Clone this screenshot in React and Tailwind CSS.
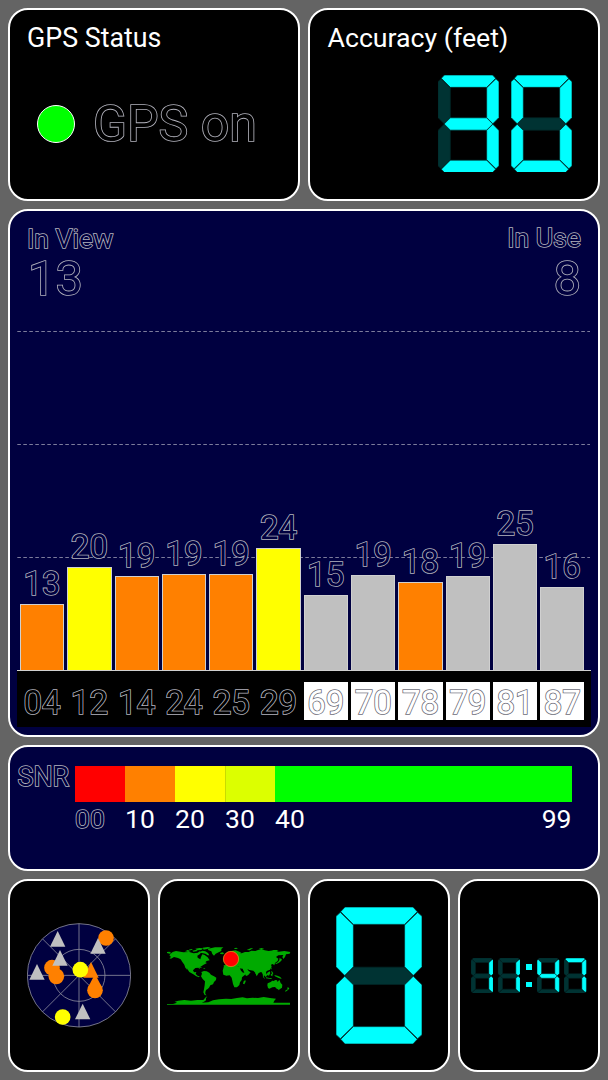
const OUTLINE = "antialiased [paint-order:stroke] [-webkit-text-stroke:1.6px_#b4b4be]";
const OUTLINE_ON_WHITE = "antialiased [paint-order:stroke] [-webkit-text-stroke:1.6px_#6c6c78]";

const satellites = [
  { id: "04", snr: 13, height: 66, color: "bg-[#ff8000]" },
  { id: "12", snr: 20, height: 103, color: "bg-[#ffff00]" },
  { id: "14", snr: 19, height: 94, color: "bg-[#ff8000]" },
  { id: "24", snr: 19, height: 96, color: "bg-[#ff8000]" },
  { id: "25", snr: 19, height: 96, color: "bg-[#ff8000]" },
  { id: "29", snr: 24, height: 122, color: "bg-[#ffff00]" },
  { id: "69", snr: 15, height: 75, color: "bg-[#c0c0c0]", boxed: true },
  { id: "70", snr: 19, height: 95, color: "bg-[#c0c0c0]", boxed: true },
  { id: "78", snr: 18, height: 88.5, color: "bg-[#ff8000]", boxed: true },
  { id: "79", snr: 19, height: 94, color: "bg-[#c0c0c0]", boxed: true },
  { id: "81", snr: 25, height: 126, color: "bg-[#c0c0c0]", boxed: true },
  { id: "87", snr: 16, height: 83, color: "bg-[#c0c0c0]", boxed: true },
];

const scale = [
  { label: "10", color: "bg-[#ff8000]" },
  { label: "20", color: "bg-[#ffff00]" },
  { label: "30", color: "bg-[#dcff00] border-l border-[#c8dc00]" },
];

// Segment outlines on a 257 x 410 grid, keyed by the usual a-g names.
const SEGMENTS = {
  a: "27,0 230,0 243,14 205,52 52,52 14,14",
  b: "244,16 257,28 257,179 231,205 205,179 205,54",
  c: "231,207 257,233 257,382 244,394 205,356 205,233",
  d: "52,358 205,358 243,396 230,410 27,410 14,396",
  e: "26,207 52,233 52,356 13,394 0,382 0,233",
  f: "13,16 52,54 52,179 26,205 0,179 0,28",
  g: "26,206 52,180 205,180 231,206 205,232 52,232",
};

const DIGITS = { 0: "abcdef", 1: "bc", 3: "abcdg", 4: "bcfg", 7: "abc" };

function Digit({ value, className, stroke = 0.7 }) {
  const lit = DIGITS[value];
  const names = Object.keys(SEGMENTS).sort((p, q) => lit.includes(p) - lit.includes(q));
  return (
    <svg viewBox="0 0 257 410" preserveAspectRatio="none" className={className} aria-label={value}>
      {names.map((name) => (
        <polygon
          key={name}
          points={SEGMENTS[name]}
          fill={lit.includes(name) ? "#00ffff" : "#003333"}
          stroke="#002626"
          strokeWidth={stroke}
          vectorEffect="non-scaling-stroke"
        />
      ))}
    </svg>
  );
}

function Card({ className = "", children }) {
  return <section className={`overflow-hidden rounded-[20px] border-2 border-white ${className}`}>{children}</section>;
}

function SatelliteChart() {
  return (
    <div className="mx-[7px]">
      <div className="relative h-[340px]">
        <svg className="absolute inset-0 h-full w-full" stroke="#7c7c9c" strokeWidth="1" strokeDasharray="3.6 2.4">
          <line x1="0.3" x2="573" y1="0.5" y2="0.5" />
          <line x1="0.3" x2="573" y1="113.5" y2="113.5" />
          <line x1="0.3" x2="573" y1="226.5" y2="226.5" />
        </svg>
        <div className="relative flex h-full items-end gap-[3.1px] border-b border-[#d0d0d0] pr-[6.5px] pl-[3px]">
          {satellites.map((s) => (
            <div key={s.id} className="flex flex-1 flex-col items-center">
              <span className={`text-[33px] leading-[40px] text-[#000040] ${OUTLINE}`}>{s.snr}</span>
              <div className={`w-full border border-b-0 border-[#d0d0d0] ${s.color}`} style={{ height: s.height }} />
            </div>
          ))}
        </div>
      </div>
      <div className="flex h-[56px] gap-[3.1px] bg-black pt-[11px] pr-[6.5px] pb-[7px] pl-[3px]">
        {satellites.map((s) => (
          <div
            key={s.id}
            className={`flex flex-1 items-center justify-center text-[33px] leading-[38px] ${
              s.boxed ? `bg-white text-white ${OUTLINE_ON_WHITE}` : `text-black ${OUTLINE}`
            }`}
          >
            <span className="pt-[4px]">{s.id}</span>
          </div>
        ))}
      </div>
    </div>
  );
}

function SkyView() {
  const tri = (x, y) => `${x},${y} ${x + 23},${y + 47} ${x - 23},${y + 47}`;
  return (
    <svg viewBox="81 159 314 314" className="h-[104.7px] w-[104.7px]">
      <g stroke="#9090a0" strokeWidth="2.4" fill="none">
        <circle cx="237" cy="316" r="155" fill="#000040" />
        <circle cx="237" cy="316" r="78" />
        <path d="M82 316H392M237 161V471M127.400 206.400L346.600 425.600M346.600 206.400L127.400 425.600" />
      </g>
      <g fill="#ff8000">
        <circle cx="318" cy="204" r="23.500" />
        <circle cx="156" cy="293" r="23.500" />
        <circle cx="169" cy="319" r="23.500" />
        <circle cx="285" cy="361" r="23.500" />
        <polygon points="285,312 307,354 263,354" />
      </g>
      <polygon points={tri(273, 276)} fill="#ff8000" />
      <circle cx="241" cy="299" r="23.500" fill="#ffff00" />
      <circle cx="188" cy="441" r="23.500" fill="#ffff00" />
      <g fill="#c0c0c0">
        <polygon points={tri(173, 183)} />
        <polygon points={tri(294, 204)} />
        <polygon points={tri(180, 240)} />
        <polygon points={tri(111, 282)} />
        <polygon points={tri(248, 401)} />
      </g>
    </svg>
  );
}

function WorldMap() {
  return (
    <svg viewBox="36 48 372 182" className="mt-[1.4px] h-[60.7px] w-[124px]">
      <g fill="#00aa00">
        <path d="M36 66l7-1 6 4-5 2-8-2zM53 66l10-3 22 4 18-1 13 4 12-2 6-4 5 3-5 6-7 4 1 6 8 5 2-7 4-8 7 2 5 4 4 3 6 9-9 2-4 4 5 2-10 5-7 5-5 3 0 6-4-5-9 1-7 7 3 6 7-1-2 6 7 6 5 1-2 3-8-3-9-6-12-7-8-12 2 6-6-7-3-9-6-8-5-8-8-4-12-3-9 5-5-1 5-4-5-5 4-5z" />
        <path d="M90 64l8-4 9 3-7 3zM101 59l8-2 5 2-8 2zM112 62l12-3 4 4-13 2zM121 56l12-2 11 1-5 5-12 1zM134 66l8-4 9 2 8 5 4 7-5 0-7-5-7-1-9-2zM143 53l16-2 8 2-11 4-10 2zM160 56l20-4 25 0-6 5 0 6-8 4-9 4-5 6-5-5-3-8-10-4z" />
        <path d="M195 69l7-2 6 3-5 3-7-1zM126 109l9 1 7 3-6 0zM144 114l7 1-3 2z" />
        <path d="M139 126l8-3 8 1 8 4 5 6 9 5 7 4-1 7-6 6-3 7-8 3-4 7-4 4-5 3-2 6 0 6 4 4-6-1-4-8 2-9 2-12 1-12-7-7-5-8 3-8z" />
        <path d="M212 80l8-5 4-8 8-5 10-1 13 5 4 3-6 2 9-2 8-3 11 0 8-4 12 1 8-3 10-3 10 4 12 2 16-2 14 4 17-2 18 3-2 5-11 2-3 8-5 6-3-6 3-6-15 1-7 5 7 5-2 7-8 6-2 7-5-4-5 2 2 6-5 9-10 4-2 5 4 8-6 4-3-7-2 6 4 9-6-7-1-12-5-3-7 3-6 10-4-11-6-6-12-2-6-3 4 6 6 4-8 9-6 2-6-12-4-10-11-1 0-5-9 1-2 5-5-5-5-7-2 6-8 2-5 4-9-1-1-9 8-1z" />
        <path d="M236 55l8-2 5 3-8 1zM275 60l12-5 8-1-11 7zM311 56l9-2 8 3-9 1zM351 60l14 0 6 3-14 1zM211 75l6-5 2 7-5 5zM207 77l4 0-2 4z" />
        <path d="M206 112l5-6 12-2 7 2 2 3 9 0 12 2 5 11 6 6 10-1-4 7-9 8-1 8-5 7-2 8-7 7-8 0-4-10-2-10-2-9-6-7-10 1-9-3-2-12z" />
        <path d="M266 154l5-4 1 5-4 8-4-2zM374 83l4 4 3-1-2 6-7 6-8 4-4-1 9-5 4-6zM347 113l3 0-1 6zM348 122l5 4 2 7-4-2zM320 125l8 5 7 8-3 2-9-8zM337 128l7-4 2 5-4 8-7-3zM348 131l5 1-1 7-5-3zM333 142l10 2 9 1-4 2-15-2zM358 135l9 2 9 4 4 6-9-3-11-5z" />
        <path d="M338 160l9-4 5-4 5 1 3-3 6 1 2 5 5-7 4 10 5 5-1 9-7 5-8-1-6-6-8 1-9 4-4-2-2-8zM368 178l6-1-2 4zM398 171l5 4-3 4-3-2zM397 178l2 2-7 5-2-2zM300 126l4 4-2 2z" />
        <path d="M36 222H54l12-4-7-3 11-3 18-2 20 2 19-2 18 0 7-8 5-3-4 6 0 6-6 4-7 3 20-1 14-6 18-3 21-2 16 1 17-3 17-2 13 3 17-2 16 1 17-3 19 3 18 2-5 6-3 6H405v6H36z" />
      </g>
      <circle cx="228" cy="87" r="23" fill="#ff0000" stroke="#d4a020" strokeWidth="2.200" />
    </svg>
  );
}

function Clock() {
  return (
    <div className="flex h-[35.7px] w-[116px] items-stretch">
      <Digit value="1" stroke={0.5} className="w-[22.4px]" />
      <Digit value="1" stroke={0.5} className="ml-[4.5px] w-[22.4px]" />
      <div className="ml-[6px] flex w-[5.3px] flex-col gap-[12.3px] pt-[6.7px]">
        <i className="h-[5.3px] bg-[#00ffff]" />
        <i className="h-[5.3px] bg-[#00ffff]" />
      </div>
      <Digit value="4" stroke={0.5} className="ml-[5.9px] w-[22.4px]" />
      <Digit value="7" stroke={0.5} className="ml-[4.5px] w-[22.4px]" />
    </div>
  );
}

export default function App() {
  return (
    <main className="flex h-[1080px] w-[608px] flex-col gap-2 bg-[#646464] p-2 font-['Roboto',sans-serif] text-white">
      <div className="grid h-[193px] shrink-0 grid-cols-2 gap-2">
        <Card className="bg-black pt-[11.5px]">
          <h2 className="pl-[17px] text-[26.8px] leading-[32px]">GPS Status</h2>
          <div className="mt-[40.5px] flex items-center gap-[18px] pl-[26.5px]">
            <div className="h-[38.5px] w-[38.5px] rounded-full border border-white bg-[#00ff00]" />
            <span className={`text-[50px] leading-[60px] text-black ${OUTLINE}`}>GPS on</span>
          </div>
        </Card>
        <Card className="bg-black pt-[11.5px]">
          <h2 className="pl-[17.5px] text-[26.7px] leading-[32px]">Accuracy (feet)</h2>
          <div className="mt-[21.200px] flex h-[97.5px] justify-end gap-[12px] pr-[26.5px]">
            <Digit value="3" className="w-[61px]" />
            <Digit value="0" className="w-[61px]" />
          </div>
        </Card>
      </div>

      <Card className="h-[528px] shrink-0 bg-[#000040] text-[#000040]">
        <div className="flex h-[120px] justify-between pr-[17px] pl-[17px]">
          <div className="pt-[12px]">
            <div className={`text-[26.7px] leading-[32px] ${OUTLINE}`}>In View</div>
            <div className={`pl-px text-[49px] leading-[48px] ${OUTLINE}`}>13</div>
          </div>
          <div className="pt-[11px] text-right">
            <div className={`text-[26.7px] leading-[32px] ${OUTLINE}`}>In Use</div>
            <div className={`mt-px text-[49px] leading-[48px] ${OUTLINE}`}>8</div>
          </div>
        </div>
        <SatelliteChart />
      </Card>

      <Card className="flex h-[126px] shrink-0 bg-[#000040] pt-[13px] pr-[26.500px] pl-[7.5px]">
        <div className={`mt-[1px] w-[57.5px] shrink-0 text-[26.8px] leading-[32px] text-[#000040] ${OUTLINE}`}>SNR</div>
        <div className="mt-[6px] flex flex-1 text-[26.5px] leading-[32px]">
          <div className="w-[50px]">
            <div className="h-[35.500px] bg-[#ff0000]" />
            <div className={`mt-[1.9px] text-[#000040] ${OUTLINE}`}>00</div>
          </div>
          {scale.map((s) => (
            <div key={s.label} className="w-[50px]">
              <div className={`h-[35.500px] ${s.color}`} />
              <div className="mt-[1.9px]">{s.label}</div>
            </div>
          ))}
          <div className="flex-1">
            <div className="h-[35.500px] bg-[#00ff00]" />
            <div className="mt-[1.9px] flex justify-between">
              <span>40</span>
              <span>99</span>
            </div>
          </div>
        </div>
      </Card>

      <div className="grid h-[193px] shrink-0 grid-cols-4 gap-2">
        <Card className="flex items-center justify-center bg-black">
          <SkyView />
        </Card>
        <Card className="flex items-center justify-center bg-black">
          <WorldMap />
        </Card>
        <Card className="flex items-center justify-center bg-black">
          <Digit value="0" className="h-[137px] w-[86px]" />
        </Card>
        <Card className="flex items-center justify-center bg-black">
          <Clock />
        </Card>
      </div>
    </main>
  );
}
